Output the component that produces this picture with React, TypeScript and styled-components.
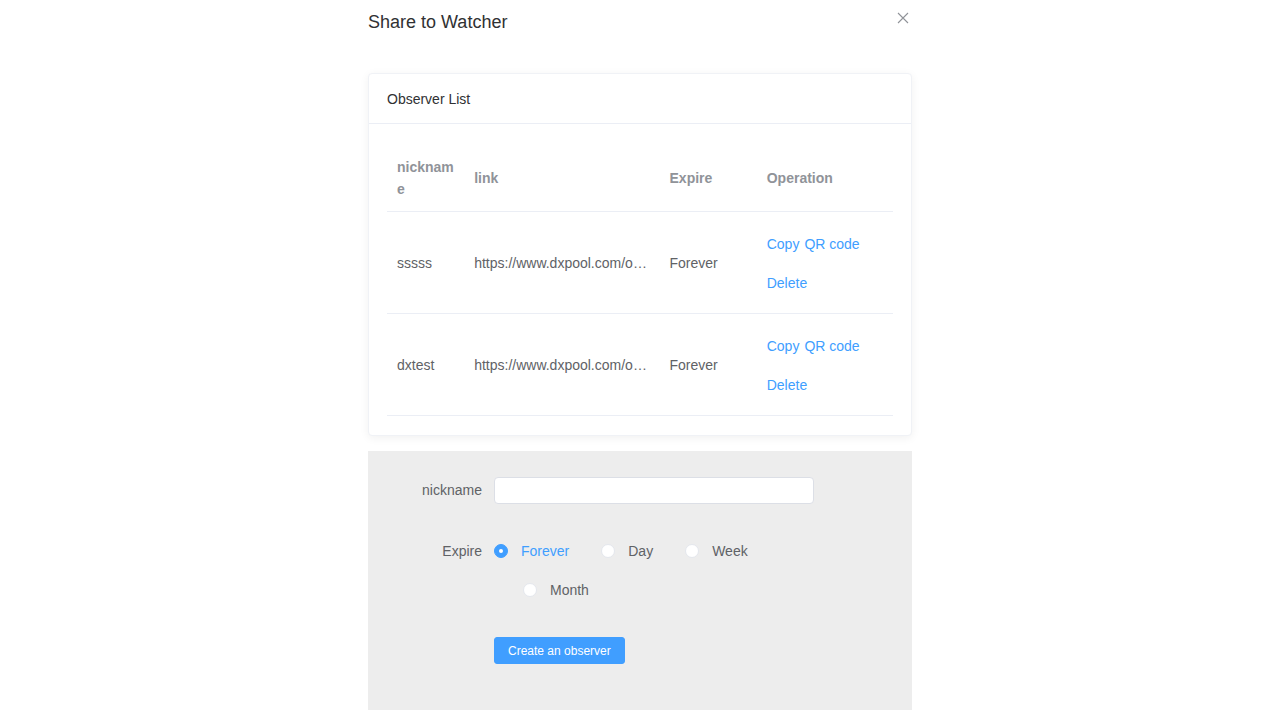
import styled, { createGlobalStyle } from 'styled-components';
import { useState } from 'react';

const GlobalStyle = createGlobalStyle`
    html, body {
        margin: 0;
        padding: 0;
        background: #fff;
        font-family: "Liberation Sans", Arial, Helvetica, sans-serif;
    }
`;

type Observer = {
    nickname: string;
    link: string;
    expire: string;
}

const observers: Observer[] = [
    { nickname: 'sssss', link: 'https://www.dxpool.com/observer/share?access_key=6f1c2e9a0b', expire: 'Forever' },
    { nickname: 'dxtest', link: 'https://www.dxpool.com/observer/share?access_key=a93d7e22c4', expire: 'Forever' },
];

const expireOptions = ['Forever', 'Day', 'Week', 'Month'];

const Dialog = styled.div`
    position: relative;
    width: 584px;
    margin: 0 auto;
    background: #fff;
`;

const Header = styled.div`
    padding: 10px 20px 9px;
`;

const Title = styled.span`
    font-size: 18px;
    line-height: 24px;
    color: #303133;
`;

const CloseButton = styled.button`
    position: absolute;
    top: 12px;
    right: 23px;
    width: 12px;
    height: 12px;
    padding: 0;
    border: none;
    background: none;
    cursor: pointer;
    display: flex;

    svg {
        width: 12px;
        height: 12px;
    }
`;

const Body = styled.div`
    padding: 30px 20px 10px;
`;

const Card = styled.div`
    border: 1px solid #f0f2f6;
    border-radius: 4px;
    background: #fff;
    box-shadow: 0 2px 10px rgba(0, 0, 0, 0.06);
    overflow: hidden;
`;

const CardHeader = styled.div`
    height: 49px;
    display: flex;
    align-items: center;
    padding: 0 18px;
    border-bottom: 1px solid #ebeef5;
    font-size: 14px;
    color: #303133;
`;

const CardBody = styled.div`
    padding: 20px 18px 19px;
`;

const Table = styled.table`
    width: 100%;
    border-collapse: collapse;
    table-layout: fixed;
    font-size: 14px;
`;

const Th = styled.th`
    padding: 12px 10px 11px;
    text-align: left;
    font-weight: bold;
    color: #909399;
    line-height: 22px;
    word-break: break-all;
    border-bottom: 1px solid #ebeef5;
`;

const Td = styled.td<{ $ellipsis?: boolean }>`
    padding: 12px 10px 11px;
    color: #606266;
    line-height: 23px;
    vertical-align: middle;
    border-bottom: 1px solid #ebeef5;
    white-space: ${p => p.$ellipsis ? 'nowrap' : 'normal'};
    overflow: hidden;
    text-overflow: ellipsis;
`;

const Actions = styled.div`
    display: flex;
    flex-wrap: wrap;
    column-gap: 5px;
`;

const TextButton = styled.button`
    height: 39px;
    padding: 0;
    border: none;
    background: none;
    font-family: inherit;
    font-size: 14px;
    color: #409eff;
    cursor: pointer;
`;

const Break = styled.div`
    flex-basis: 100%;
    height: 0;
`;

const FormPanel = styled.div`
    margin-top: 15px;
    background: #ededed;
    padding: 19px 0 46px;
`;

const FormItem = styled.div<{ $gap: number }>`
    display: flex;
    margin-bottom: ${p => p.$gap}px;
`;

const Label = styled.label`
    width: 114px;
    flex-shrink: 0;
    padding-right: 12px;
    text-align: right;
    font-size: 14px;
    line-height: 40px;
    color: #606266;
`;

const Content = styled.div`
    width: 320px;
    line-height: 40px;
    display: flex;
    flex-wrap: wrap;
    align-items: center;
`;

const Input = styled.input`
    box-sizing: border-box;
    width: 320px;
    height: 27px;
    padding: 0 10px;
    border: 1px solid #dcdfe6;
    border-radius: 4px;
    background: #fff;
    font-family: inherit;
    font-size: 13px;
    color: #606266;
    outline: none;
`;

const Radio = styled.label<{ $checked: boolean }>`
    display: inline-flex;
    align-items: center;
    height: 39px;
    margin-right: 32px;
    font-size: 14px;
    color: ${p => p.$checked ? '#409eff' : '#606266'};
    cursor: pointer;

    &:nth-child(n+4) {
        margin-left: 29px;
    }

    input {
        display: none;
    }
`;

const RadioDot = styled.span<{ $checked: boolean }>`
    box-sizing: border-box;
    width: 14px;
    height: 14px;
    margin-right: 13px;
    border-radius: 50%;
    border: 1px solid ${p => p.$checked ? '#409eff' : '#e4e7ed'};
    background: ${p => p.$checked ? '#409eff' : '#fff'};
    display: flex;
    align-items: center;
    justify-content: center;

    &::after {
        content: '';
        width: 4px;
        height: 4px;
        border-radius: 50%;
        background: #fff;
        display: ${p => p.$checked ? 'block' : 'none'};
    }
`;

const PrimaryButton = styled.button`
    height: 27px;
    margin-top: 6px;
    padding: 0 13px;
    border: 1px solid #409eff;
    border-radius: 3px;
    background: #409eff;
    color: #fff;
    font-family: inherit;
    font-size: 12px;
    cursor: pointer;
`;

function CloseIcon() {
    return (
        <svg viewBox="0 0 12 12" fill="none" stroke="#909399" strokeWidth="1.1">
            <path d="M1 1 L11 11 M11 1 L1 11" />
        </svg>
    )
}

export default function App() {
    const [expire, setExpire] = useState('Forever');
    const [nickname, setNickname] = useState('');

    return (
        <>
            <GlobalStyle />
            <Dialog>
                <Header>
                    <Title>Share to Watcher</Title>
                </Header>
                <CloseButton aria-label="Close"><CloseIcon /></CloseButton>
                <Body>
                    <Card>
                        <CardHeader>Observer List</CardHeader>
                        <CardBody>
                            <Table>
                                <colgroup>
                                    <col style={{ width: 77 }} />
                                    <col style={{ width: 195 }} />
                                    <col style={{ width: 97 }} />
                                    <col style={{ width: 136 }} />
                                </colgroup>
                                <thead>
                                    <tr>
                                        <Th>nickname</Th>
                                        <Th>link</Th>
                                        <Th>Expire</Th>
                                        <Th>Operation</Th>
                                    </tr>
                                </thead>
                                <tbody>
                                    {observers.map(o => (
                                        <tr key={o.nickname}>
                                            <Td>{o.nickname}</Td>
                                            <Td $ellipsis>{o.link}</Td>
                                            <Td>{o.expire}</Td>
                                            <Td>
                                                <Actions>
                                                    <TextButton>Copy</TextButton>
                                                    <TextButton>QR code</TextButton>
                                                    <Break />
                                                    <TextButton>Delete</TextButton>
                                                </Actions>
                                            </Td>
                                        </tr>
                                    ))}
                                </tbody>
                            </Table>
                        </CardBody>
                    </Card>

                    <FormPanel>
                        <FormItem $gap={21}>
                            <Label>nickname</Label>
                            <Content>
                                <Input value={nickname} onChange={e => setNickname(e.target.value)} />
                            </Content>
                        </FormItem>
                        <FormItem $gap={22}>
                            <Label>Expire</Label>
                            <Content>
                                {expireOptions.map(opt => (
                                    <Radio key={opt} $checked={expire === opt}>
                                        <input type="radio" checked={expire === opt} onChange={() => setExpire(opt)} />
                                        <RadioDot $checked={expire === opt} />
                                        {opt}
                                    </Radio>
                                ))}
                            </Content>
                        </FormItem>
                        <FormItem $gap={0}>
                            <Label />
                            <Content>
                                <PrimaryButton>Create an observer</PrimaryButton>
                            </Content>
                        </FormItem>
                    </FormPanel>
                </Body>
            </Dialog>
        </>
    )
}
